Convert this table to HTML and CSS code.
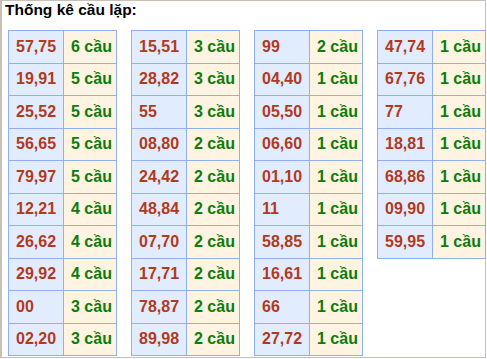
FILE: index.html
```html
<!DOCTYPE html>
<html>
<head>
<meta charset="utf-8">
<link rel="stylesheet" href="styles.css">
</head>
<body>
<div class="frame">
  <div class="title">Thống kê cầu lặp:</div>
  <div class="tables">
    <table class="stat">
      <tr><td class="num">57,75</td><td class="cnt">6 cầu</td></tr>
      <tr><td class="num">19,91</td><td class="cnt">5 cầu</td></tr>
      <tr><td class="num">25,52</td><td class="cnt">5 cầu</td></tr>
      <tr><td class="num">56,65</td><td class="cnt">5 cầu</td></tr>
      <tr><td class="num">79,97</td><td class="cnt">5 cầu</td></tr>
      <tr><td class="num">12,21</td><td class="cnt">4 cầu</td></tr>
      <tr><td class="num">26,62</td><td class="cnt">4 cầu</td></tr>
      <tr><td class="num">29,92</td><td class="cnt">4 cầu</td></tr>
      <tr><td class="num">00</td><td class="cnt">3 cầu</td></tr>
      <tr><td class="num">02,20</td><td class="cnt">3 cầu</td></tr>
    </table>
    <table class="stat">
      <tr><td class="num">15,51</td><td class="cnt">3 cầu</td></tr>
      <tr><td class="num">28,82</td><td class="cnt">3 cầu</td></tr>
      <tr><td class="num">55</td><td class="cnt">3 cầu</td></tr>
      <tr><td class="num">08,80</td><td class="cnt">2 cầu</td></tr>
      <tr><td class="num">24,42</td><td class="cnt">2 cầu</td></tr>
      <tr><td class="num">48,84</td><td class="cnt">2 cầu</td></tr>
      <tr><td class="num">07,70</td><td class="cnt">2 cầu</td></tr>
      <tr><td class="num">17,71</td><td class="cnt">2 cầu</td></tr>
      <tr><td class="num">78,87</td><td class="cnt">2 cầu</td></tr>
      <tr><td class="num">89,98</td><td class="cnt">2 cầu</td></tr>
    </table>
    <table class="stat">
      <tr><td class="num">99</td><td class="cnt">2 cầu</td></tr>
      <tr><td class="num">04,40</td><td class="cnt">1 cầu</td></tr>
      <tr><td class="num">05,50</td><td class="cnt">1 cầu</td></tr>
      <tr><td class="num">06,60</td><td class="cnt">1 cầu</td></tr>
      <tr><td class="num">01,10</td><td class="cnt">1 cầu</td></tr>
      <tr><td class="num">11</td><td class="cnt">1 cầu</td></tr>
      <tr><td class="num">58,85</td><td class="cnt">1 cầu</td></tr>
      <tr><td class="num">16,61</td><td class="cnt">1 cầu</td></tr>
      <tr><td class="num">66</td><td class="cnt">1 cầu</td></tr>
      <tr><td class="num">27,72</td><td class="cnt">1 cầu</td></tr>
    </table>
    <table class="stat">
      <tr><td class="num">47,74</td><td class="cnt">1 cầu</td></tr>
      <tr><td class="num">67,76</td><td class="cnt">1 cầu</td></tr>
      <tr><td class="num">77</td><td class="cnt">1 cầu</td></tr>
      <tr><td class="num">18,81</td><td class="cnt">1 cầu</td></tr>
      <tr><td class="num">68,86</td><td class="cnt">1 cầu</td></tr>
      <tr><td class="num">09,90</td><td class="cnt">1 cầu</td></tr>
      <tr><td class="num">59,95</td><td class="cnt">1 cầu</td></tr>
    </table>
  </div>
</div>
</body>
</html>
```
FILE: styles.css
```css
html, body {
  margin: 0;
  padding: 0;
  background: #ffffff;
}
body {
  font-family: "Liberation Sans", Arial, sans-serif;
}
.frame {
  box-sizing: border-box;
  width: 486px;
  height: 358px;
  border: 1px solid #c8c0b5;
  border-left-width: 2px;
}
.title {
  font-size: 15.5px;
  font-weight: bold;
  color: #000;
  line-height: 17px;
  padding-left: 3px;
  margin-bottom: 12px;
}
.tables {
  display: flex;
  align-items: flex-start;
  gap: 14px;
  padding-left: 6px;
}
.stat {
  border-collapse: collapse;
  width: 109px;
  flex: none;
  table-layout: fixed;
}
.stat td {
  border: 1px solid #8fb1f3;
  height: 32.5px;
  padding: 0 0 0 7px;
  font-size: 16px;
  font-weight: bold;
  box-sizing: border-box;
  white-space: nowrap;
}
.stat .num {
  width: 55px;
  background: #e1edff;
  color: #b3391c;
}
.stat .cnt {
  background: #fff3e1;
  color: #0c7c0c;
}
```
